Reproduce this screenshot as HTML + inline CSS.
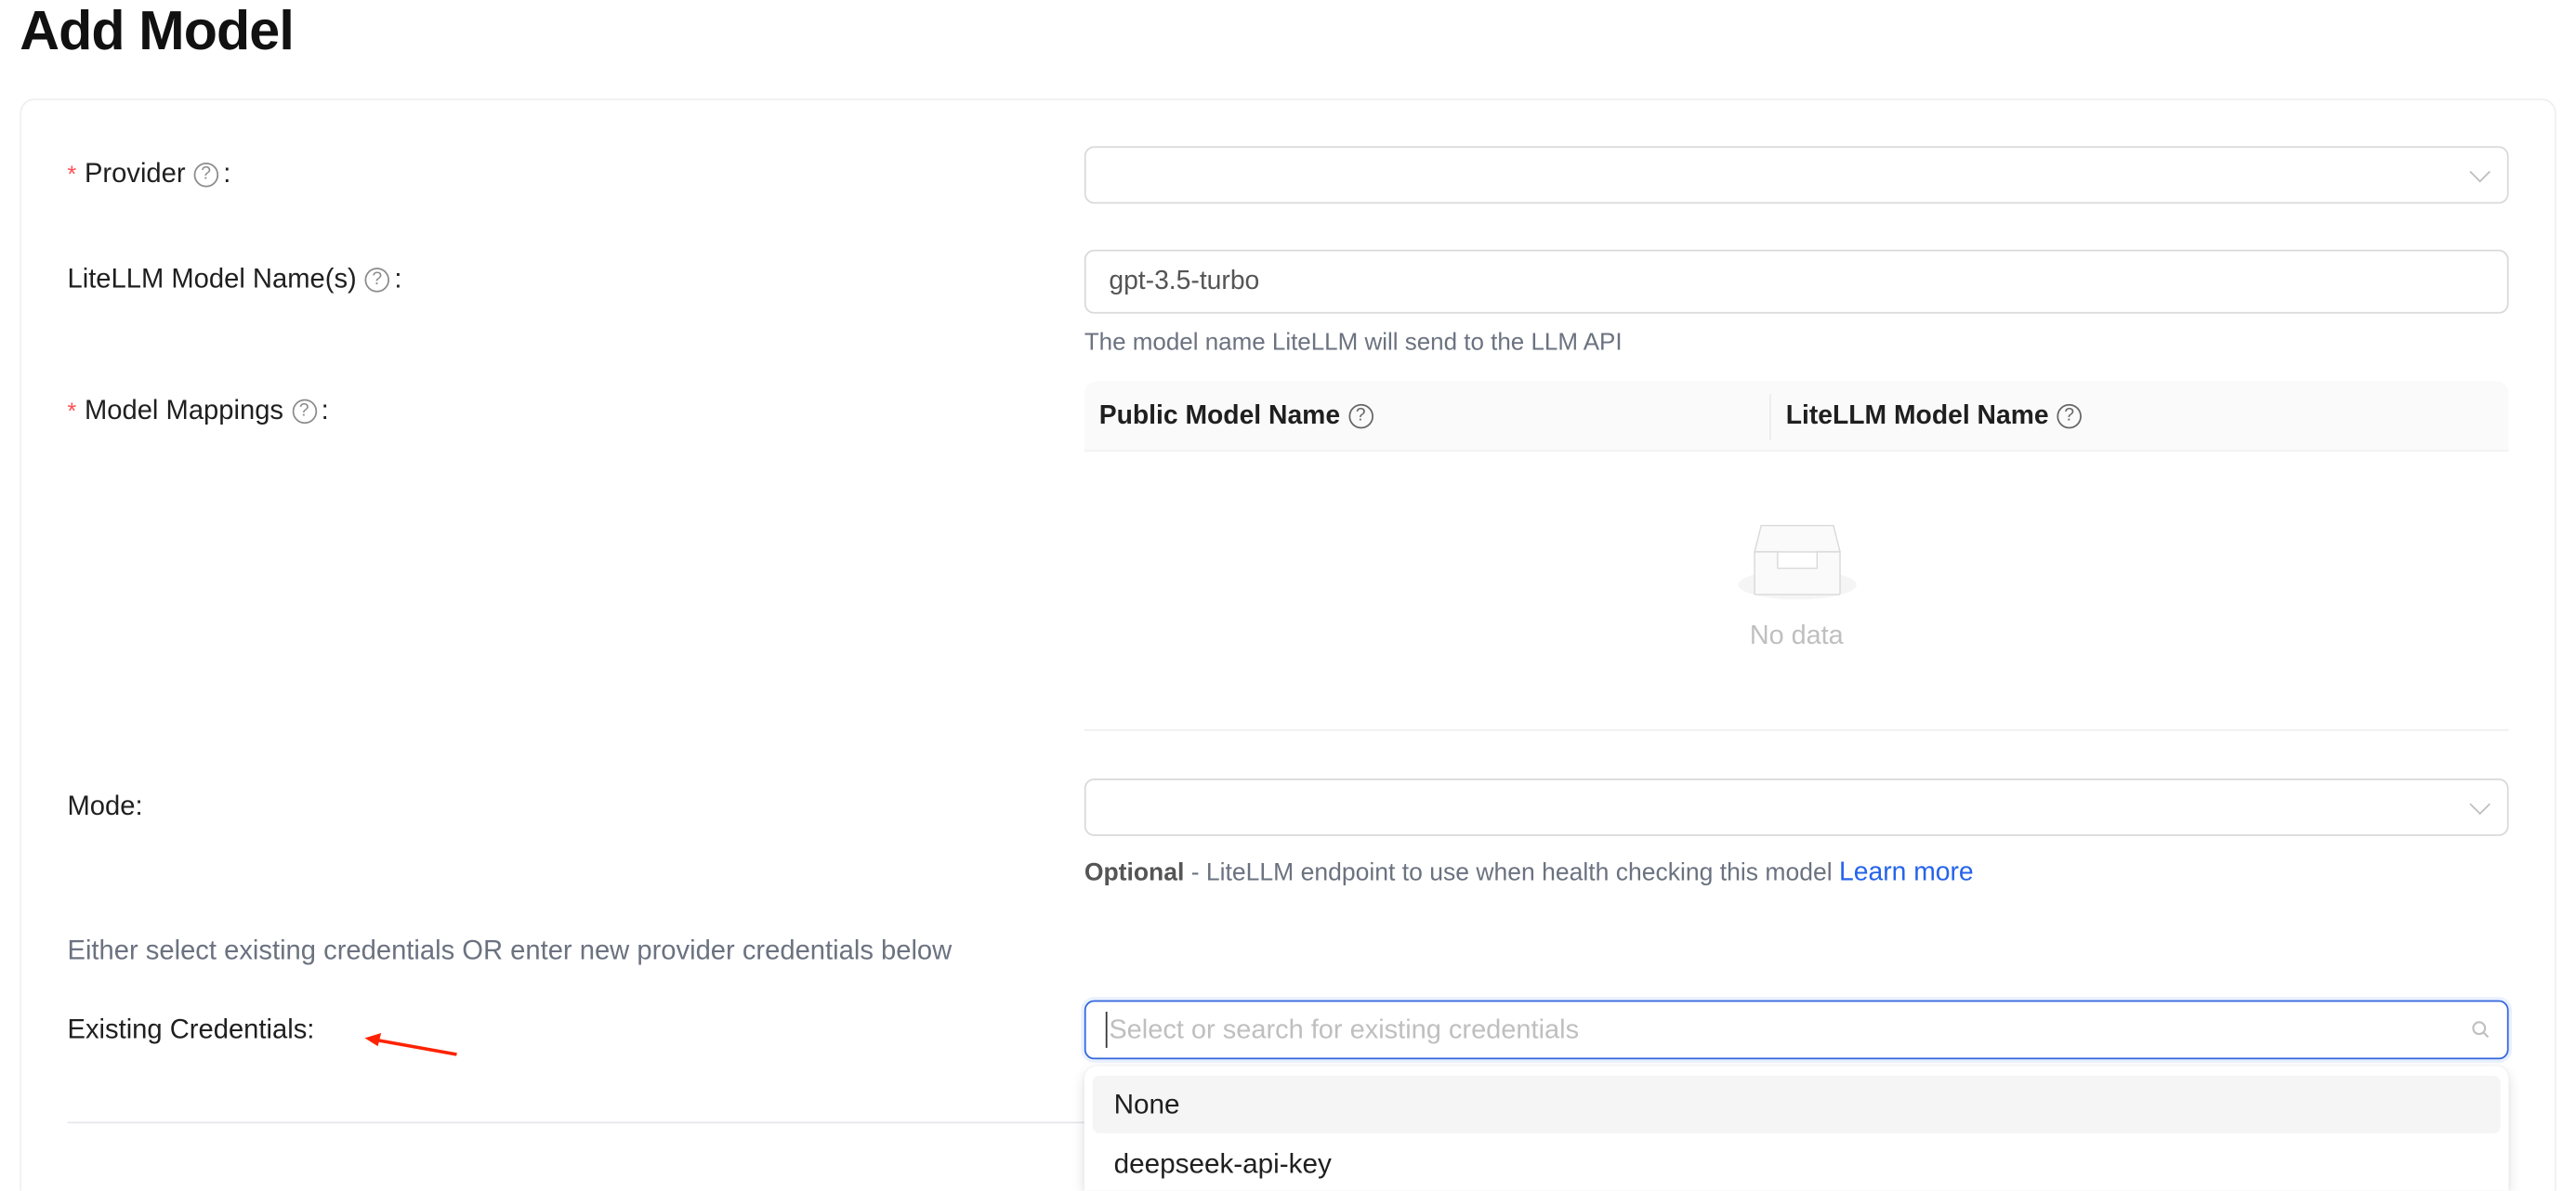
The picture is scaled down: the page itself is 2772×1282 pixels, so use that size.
<!DOCTYPE html>
<html><head><meta charset="utf-8"><style>
html,body{margin:0;padding:0;background:#fff;overflow:hidden;width:2772px;height:1282px}
#w{position:absolute;left:0;top:0;width:1568px;height:725px;overflow:hidden;transform:scale(1.7679);transform-origin:0 0;font-family:"Liberation Sans",sans-serif;color:#1f1f1f}
.a{position:absolute}
.lbl{position:absolute;font-size:16.5px;line-height:20px;color:#1f1f1f;white-space:nowrap}
.req{color:#ff4d4f;font-size:14px;margin-right:5px;position:relative;top:0px}
.q{display:inline-block;box-sizing:border-box;width:15px;height:15px;border:1px solid #8c8c8c;border-radius:50%;font-size:11px;line-height:13px;text-align:center;color:#8c8c8c;vertical-align:-1px;position:relative;top:-3px;margin-left:5px;margin-right:3px}
.box{position:absolute;left:660px;width:865px;border:1px solid #d9d9d9;border-radius:6px;background:#fff}
.chev{position:absolute;right:12px;top:50%;width:8px;height:8px;border-right:1.2px solid #bfbfbf;border-bottom:1.2px solid #bfbfbf;transform:translateY(-75%) rotate(45deg)}
.help{position:absolute;left:660px;font-size:14.7px;color:#6b7280;white-space:nowrap}
</style></head><body><div id="w">
<div class="a" style="left:12px;top:1px;font-size:33.5px;font-weight:bold;letter-spacing:-0.5px;color:#111">Add Model</div>
<div class="a" style="left:12px;top:60px;width:1542px;height:680px;border:1px solid #efefef;border-bottom:none;border-radius:9px 9px 0 0"></div>

<div class="lbl" style="left:41px;top:96px"><span class="req">*</span>Provider<span class="q">?</span>:</div>
<div class="box" style="top:89px;height:33px"><div class="chev"></div></div>

<div class="lbl" style="left:41px;top:160px">LiteLLM Model Name(s)<span class="q">?</span>:</div>
<div class="box" style="top:152px;height:37px"><div class="a" style="left:14px;top:10px;font-size:16px;color:#555">gpt-3.5-turbo</div></div>
<div class="help" style="top:201px">The model name LiteLLM will send to the LLM API</div>

<div class="lbl" style="left:41px;top:240px"><span class="req">*</span>Model Mappings<span class="q">?</span>:</div>
<div class="a" style="left:660px;top:232px;width:867px;height:42px;background:#fafafa;border-bottom:1px solid #f0f0f0;border-radius:8px 8px 0 0"></div>
<div class="a" style="left:1077px;top:240px;width:1px;height:28px;background:#ececec"></div>
<div class="lbl" style="left:669px;top:244px;font-weight:bold;font-size:16px">Public Model Name<span class="q" style="font-weight:normal;border-color:#666;color:#666">?</span></div>
<div class="lbl" style="left:1087px;top:244px;font-weight:bold;font-size:16px">LiteLLM Model Name<span class="q" style="font-weight:normal;border-color:#666;color:#666">?</span></div>
<svg class="a" style="left:1050px;top:310px" width="90" height="60" viewBox="1050 310 90 60">
<ellipse cx="1094" cy="356" rx="36" ry="9" fill="#f5f5f5"/>
<path d="M1072 320 L1116 320 L1120 336 L1068 336 Z" fill="#fafafa" stroke="#d9d9d9" stroke-width="0.8"/>
<path d="M1068 336 L1082 336 L1082 346 L1106 346 L1106 336 L1120 336 L1120 361 Q1120 362 1119 362 L1069 362 Q1068 362 1068 361 Z" fill="#fafafa" stroke="#d9d9d9" stroke-width="0.8"/>
</svg>
<div class="a" style="left:1065px;top:378px;font-size:16.3px;color:#bfbfbf">No data</div>
<div class="a" style="left:660px;top:444px;width:867px;height:1px;background:#f0f0f0"></div>

<div class="lbl" style="left:41px;top:481px">Mode:</div>
<div class="box" style="top:474px;height:33px"><div class="chev"></div></div>
<div class="help" style="top:523px;font-size:15px"><b style="color:#555">Optional</b> - LiteLLM endpoint to use when health checking this model <span style="color:#2563eb;font-size:16px">Learn more</span></div>

<div class="lbl" style="left:41px;top:569px;color:#6b7280">Either select existing credentials OR enter new provider credentials below</div>

<div class="lbl" style="left:41px;top:617px">Existing Credentials:</div>
<svg class="a" style="left:218px;top:626px" width="64" height="20"><line x1="60" y1="16" x2="10" y2="7" stroke="#f20" stroke-width="2"/><path d="M4 6 L14 3 L12 11 Z" fill="#f20"/></svg>
<div class="box" style="top:609px;height:34px;border-color:#3366dd;box-shadow:0 0 0 2px #eaf1fe"><div class="a" style="left:12px;top:6px;width:1px;height:22px;background:#333"></div><div class="a" style="left:14px;top:8px;font-size:16.4px;color:#bfbfbf">Select or search for existing credentials</div>
<svg class="a" style="right:10px;top:11px" width="12" height="12"><circle cx="5" cy="5" r="3.6" fill="none" stroke="#bfbfbf" stroke-width="1.2"/><line x1="7.6" y1="7.6" x2="10.5" y2="10.5" stroke="#bfbfbf" stroke-width="1.2"/></svg></div>

<div class="a" style="left:41px;top:683px;width:619px;height:1px;background:#e5e7eb"></div>
<div class="a" style="left:660px;top:649px;width:867px;height:76px;background:#fff;border-radius:8px 8px 0 0;box-shadow:0 3px 8px rgba(0,0,0,0.12),0 0 2px rgba(0,0,0,0.06)">
<div class="a" style="left:5px;top:6px;width:857px;height:35px;background:#f5f5f5;border-radius:4px"></div>
<div class="a" style="left:18px;top:14px;font-size:16.8px;color:#1f1f1f">None</div>
<div class="a" style="left:18px;top:50px;font-size:16.8px;color:#1f1f1f">deepseek-api-key</div>
</div>
</div></body></html>
